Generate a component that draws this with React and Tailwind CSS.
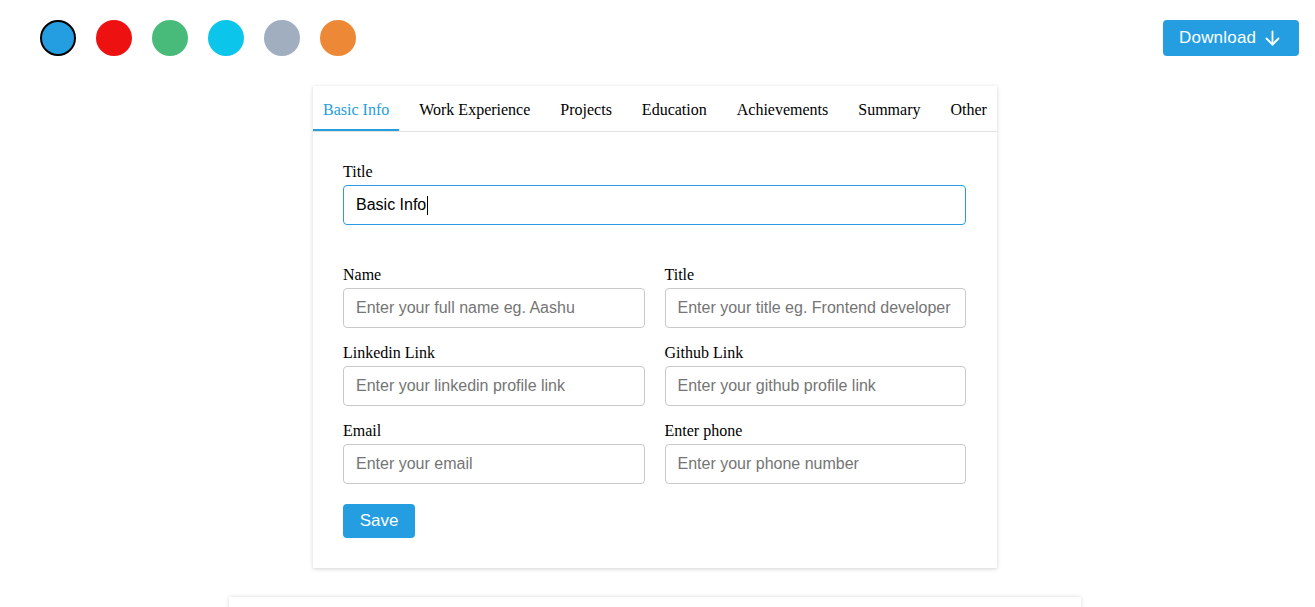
import React from "react";

const colors = ["#249ee0", "#ee1111", "#48bb7a", "#0bc5ea", "#a0aec0", "#ed8936"];
const tabs = ["Basic Info", "Work Experience", "Projects", "Education", "Achievements", "Summary", "Other"];

const serif = { fontFamily: '"Liberation Serif", "Times New Roman", serif' };
const sans = { fontFamily: '"Liberation Sans", Arial, sans-serif' };

function Field({ label, placeholder }) {
  return (
    <div className="flex flex-col">
      <label className="pt-[1px] text-[16px] leading-[17px] text-black" style={serif}>
        {label}
      </label>
      <input
        placeholder={placeholder}
        className="mt-[5px] h-[40px] w-full rounded-[4px] border border-[#c9c9c9] px-[12px] text-[16px] text-black outline-none placeholder:text-[#757575]"
        style={sans}
      />
    </div>
  );
}

export default function App() {
  return (
    <div className="min-h-screen bg-white overflow-hidden">
      <div className="flex items-center justify-between pl-[40px] pr-[16px] pt-[20px]">
        <div className="flex items-center gap-[20px]">
          {colors.map((c, i) => (
            <div
              key={c}
              className={
                "h-[36px] w-[36px] rounded-full " + (i === 0 ? "border-2 border-black" : "")
              }
              style={{ backgroundColor: c }}
            />
          ))}
        </div>
        <button
          className="flex h-[36px] w-[136px] items-center rounded-[4px] bg-[#249ee0] pl-[16px] text-[17px] tracking-[0.2px] text-white"
          style={sans}
        >
          <span>Download</span>
          <svg className="ml-[9px]" width="15" height="16" viewBox="0 0 15 16" fill="none">
            <path d="M7.5 1.5V14.5" stroke="white" strokeWidth="1.8" strokeLinecap="round" />
            <path d="M1.5 8.5L7.5 14.5L13.5 8.5" stroke="white" strokeWidth="1.8" strokeLinecap="round" strokeLinejoin="round" />
          </svg>
        </button>
      </div>

      <div className="flex flex-col items-center pr-[5px]">
        <div className="mt-[30px] w-[684px] bg-white shadow-[0_1px_4px_rgba(0,0,0,0.18)]">
          <div className="flex justify-between border-b border-[#e2e2e2]">
            {tabs.map((t, i) => (
              <div
                key={t}
                className={
                  "relative flex h-[45px] items-center px-[10px] pt-[3px] text-[16px] " +
                  (i === 0 ? "text-[#249ee0]" : "text-black")
                }
                style={serif}
              >
                {t}
                {i === 0 && <div className="absolute bottom-0 left-0 right-0 h-[2px] bg-[#249ee0]" />}
              </div>
            ))}
          </div>

          <div className="px-[30px] pb-[30px] pt-[30px]">
            <div className="flex flex-col pr-[1px]">
              <label className="pt-[1px] text-[16px] leading-[17px] text-black" style={serif}>
                Title
              </label>
              <div
                className="mt-[5px] flex h-[40px] w-full items-center rounded-[4px] border border-[#2b9ae0] px-[12px] text-[16px] text-black"
                style={sans}
              >
                <span>Basic Info</span>
                <span className="ml-[1px] inline-block h-[19px] w-[1px] bg-black" />
              </div>
            </div>

            <div className="mt-[40px] grid grid-cols-2 gap-x-[20px] gap-y-[15px] pr-[1px]">
              <Field label="Name" placeholder="Enter your full name eg. Aashu" />
              <Field label="Title" placeholder="Enter your title eg. Frontend developer" />
              <Field label="Linkedin Link" placeholder="Enter your linkedin profile link" />
              <Field label="Github Link" placeholder="Enter your github profile link" />
              <Field label="Email" placeholder="Enter your email" />
              <Field label="Enter phone" placeholder="Enter your phone number" />
            </div>

            <button
              className="mt-[20px] flex h-[34px] w-[72px] items-center justify-center rounded-[4px] bg-[#249ee0] text-[17px] text-white"
              style={sans}
            >
              Save
            </button>
          </div>
        </div>

        <div className="mt-[29px] h-[400px] w-[852px] bg-white shadow-[0_0_4px_rgba(0,0,0,0.15)]" />
      </div>
    </div>
  );
}
